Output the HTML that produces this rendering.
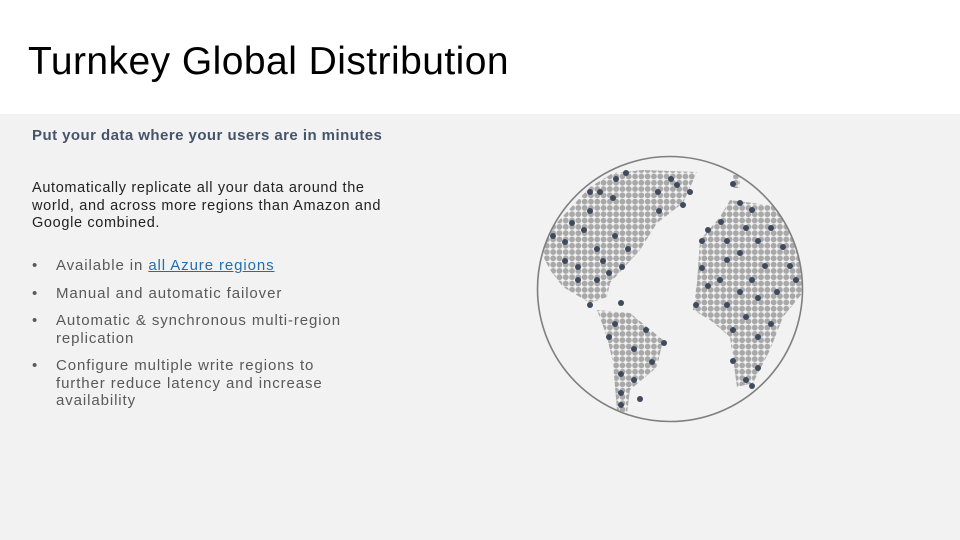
<!DOCTYPE html>
<html><head><meta charset="utf-8"><style>
html,body{margin:0;padding:0}
body{width:960px;height:540px;overflow:hidden;background:#f2f2f2;font-family:"Liberation Sans",sans-serif;position:relative}
.hdr{position:absolute;left:0;top:0;width:960px;height:114px;background:#fff}
h1{position:absolute;left:28px;top:40px;margin:0;font-weight:normal;font-size:39px;color:#000;letter-spacing:0.45px}
.sub{position:absolute;left:32px;top:127px;font-size:15px;font-weight:bold;color:#44546a;letter-spacing:0.45px}
.p{position:absolute;left:32px;top:180px;width:362px;font-size:14.5px;line-height:17.5px;color:#222;letter-spacing:0.65px}
ul{position:absolute;left:32px;top:257px;margin:0;padding:0;list-style:none;width:318px;font-size:15px;line-height:17.5px;color:#595959;letter-spacing:0.9px}
li{position:relative;padding-left:24px;margin-bottom:10px}
li:before{content:"•";position:absolute;left:0;top:0}
a{color:#1f6fb0;text-decoration:underline}
svg{position:absolute;left:0;top:0}
</style></head><body>
<div class="hdr"></div>
<h1>Turnkey Global Distribution</h1>
<div class="sub">Put your data where your users are in minutes</div>
<div class="p">Automatically replicate all your data around the world, and across more regions than Amazon and Google combined.</div>
<ul>
<li>Available in <a>all Azure regions</a></li>
<li>Manual and automatic failover</li>
<li>Automatic &amp; synchronous multi-region replication</li>
<li>Configure multiple write regions to further reduce latency and increase availability</li>
</ul>
<svg width="960" height="540">
<defs>
<pattern id="d" x="550" y="167" width="6.3" height="6.3" patternUnits="userSpaceOnUse">
<circle cx="3.15" cy="3.15" r="2.9" fill="#a8a8a8"/>
</pattern>
<clipPath id="c"><circle cx="670" cy="289" r="132"/></clipPath>
</defs>
<g clip-path="url(#c)" fill="url(#d)">
<polygon points="550,230 590,187 613,173 643,170 697,172 683,203 657,223 640,250 610,283 607,297 590,303 563,287 550,270 540,250"/>
<polygon points="597,310 630,313 663,340 657,367 630,390 627,413 617,410 613,363 607,337"/>
<polygon points="730,200 783,207 800,230 805,290 783,317 770,350 753,383 737,387 730,337 710,320 693,310 697,283 700,240 720,217"/>
<polygon points="733,175 740,175 740,188 733,188"/>
</g>
<g fill="#3f4a5c" clip-path="url(#c)">
<circle cx="626" cy="173" r="3"/><circle cx="616" cy="179" r="3"/><circle cx="613" cy="198" r="3"/>
<circle cx="590" cy="192" r="3"/><circle cx="600" cy="192" r="3"/><circle cx="590" cy="211" r="3"/>
<circle cx="572" cy="223" r="3"/><circle cx="553" cy="236" r="3"/><circle cx="584" cy="230" r="3"/>
<circle cx="565" cy="242" r="3"/><circle cx="597" cy="249" r="3"/><circle cx="615" cy="236" r="3"/>
<circle cx="628" cy="249" r="3"/><circle cx="603" cy="261" r="3"/><circle cx="578" cy="267" r="3"/>
<circle cx="565" cy="261" r="3"/><circle cx="609" cy="273" r="3"/><circle cx="578" cy="280" r="3"/>
<circle cx="597" cy="280" r="3"/><circle cx="622" cy="267" r="3"/><circle cx="590" cy="305" r="3"/>
<circle cx="621" cy="303" r="3"/><circle cx="671" cy="179" r="3"/><circle cx="677" cy="185" r="3"/>
<circle cx="658" cy="192" r="3"/><circle cx="659" cy="211" r="3"/><circle cx="690" cy="192" r="3"/>
<circle cx="683" cy="205" r="3"/><circle cx="615" cy="324" r="3"/><circle cx="609" cy="337" r="3"/>
<circle cx="646" cy="330" r="3"/><circle cx="664" cy="343" r="3"/><circle cx="634" cy="349" r="3"/>
<circle cx="652" cy="362" r="3"/><circle cx="621" cy="374" r="3"/><circle cx="634" cy="380" r="3"/>
<circle cx="621" cy="393" r="3"/><circle cx="640" cy="399" r="3"/><circle cx="621" cy="405" r="3"/>
<circle cx="733" cy="184" r="3"/><circle cx="740" cy="203" r="3"/><circle cx="752" cy="210" r="3"/>
<circle cx="721" cy="222" r="3"/><circle cx="708" cy="230" r="3"/><circle cx="746" cy="228" r="3"/>
<circle cx="771" cy="228" r="3"/><circle cx="702" cy="241" r="3"/><circle cx="727" cy="241" r="3"/>
<circle cx="758" cy="241" r="3"/><circle cx="783" cy="247" r="3"/><circle cx="740" cy="253" r="3"/>
<circle cx="790" cy="266" r="3"/><circle cx="702" cy="268" r="3"/><circle cx="727" cy="260" r="3"/>
<circle cx="765" cy="266" r="3"/><circle cx="720" cy="280" r="3"/><circle cx="752" cy="280" r="3"/>
<circle cx="796" cy="280" r="3"/><circle cx="708" cy="286" r="3"/><circle cx="740" cy="292" r="3"/>
<circle cx="777" cy="292" r="3"/><circle cx="696" cy="305" r="3"/><circle cx="727" cy="305" r="3"/>
<circle cx="758" cy="298" r="3"/><circle cx="746" cy="317" r="3"/><circle cx="771" cy="324" r="3"/>
<circle cx="733" cy="330" r="3"/><circle cx="758" cy="337" r="3"/><circle cx="733" cy="361" r="3"/>
<circle cx="758" cy="368" r="3"/><circle cx="746" cy="380" r="3"/><circle cx="752" cy="386" r="3"/>
</g>
<circle cx="670" cy="289" r="132.5" fill="none" stroke="#7f7f7f" stroke-width="1.6"/>
</svg>
</body></html>
